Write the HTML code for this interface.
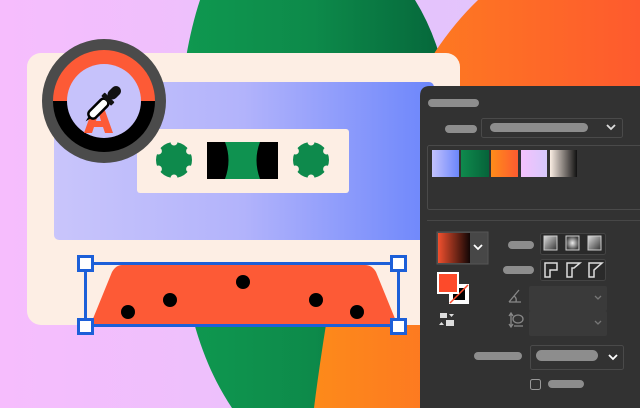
<!DOCTYPE html>
<html><head><meta charset="utf-8"><style>
html,body{margin:0;padding:0;width:640px;height:408px;overflow:hidden;background:#f0bdfd}
svg{display:block;position:absolute;left:0;top:0}
</style></head><body>
<svg width="640" height="408" viewBox="0 0 640 408" xmlns="http://www.w3.org/2000/svg">
<defs>
<linearGradient id="bg" x1="0" x2="1"><stop offset="0" stop-color="#f6bdfd"/><stop offset="1" stop-color="#dcc6fb"/></linearGradient>
<linearGradient id="gr" x1="0" x2="1"><stop offset="0" stop-color="#0f9950"/><stop offset="0.5" stop-color="#0d8a4a"/><stop offset="1" stop-color="#05653a"/></linearGradient>
<linearGradient id="or" x1="0" x2="1"><stop offset="0" stop-color="#fd8a1a"/><stop offset="1" stop-color="#fe5a2e"/></linearGradient>
<linearGradient id="win" x1="0" x2="1"><stop offset="0" stop-color="#c9c5fb"/><stop offset="0.5" stop-color="#b2b3fb"/><stop offset="1" stop-color="#6c86fb"/></linearGradient>
<linearGradient id="s1" x1="0" x2="1"><stop offset="0" stop-color="#c3c2fd"/><stop offset="1" stop-color="#6b86fb"/></linearGradient>
<linearGradient id="s2" x1="0" x2="1"><stop offset="0" stop-color="#0f8a4d"/><stop offset="1" stop-color="#06633a"/></linearGradient>
<linearGradient id="s3" x1="0" x2="1"><stop offset="0" stop-color="#fe8c1a"/><stop offset="1" stop-color="#fe5b30"/></linearGradient>
<linearGradient id="s4" x1="0" x2="1"><stop offset="0" stop-color="#f5c2fd"/><stop offset="1" stop-color="#d6c8fb"/></linearGradient>
<linearGradient id="s5" x1="0" x2="1"><stop offset="0" stop-color="#fbeee4"/><stop offset="1" stop-color="#111"/></linearGradient>
<linearGradient id="s6" x1="0" x2="1"><stop offset="0" stop-color="#f0502e"/><stop offset="1" stop-color="#120605"/></linearGradient>
<linearGradient id="btn" x1="0" y1="0" x2="1" y2="1"><stop offset="0" stop-color="#ddd"/><stop offset="1" stop-color="#333"/></linearGradient>
<radialGradient id="rad"><stop offset="0" stop-color="#eee"/><stop offset="1" stop-color="#444"/></radialGradient>
</defs>
<rect width="640" height="408" fill="url(#bg)"/>
<path d="M200,0 L415,0 Q440,40 450,100 L440,408 L232,408 C210,375 190,330 180,250 C172,150 180,60 200,0Z" fill="url(#gr)"/>
<path d="M478,0 Q455,22 435,52 L330,300 Q320,360 314,408 L640,408 L640,0Z" fill="url(#or)"/>
<rect x="27" y="53" width="433" height="272" rx="14" fill="#fdeee4"/>
<rect x="54" y="82" width="380" height="158" rx="5" fill="url(#win)"/>
<rect x="137" y="129" width="212" height="64" rx="3" fill="#fdeee4"/>
<g fill="#0e8a4c">
<circle cx="174" cy="160" r="18"/><circle cx="311" cy="160" r="18"/>
</g>
<g fill="#fdeee4">
<circle cx="174" cy="142" r="3.5"/><circle cx="174" cy="178" r="3.5"/><circle cx="158.4" cy="151" r="3.5"/><circle cx="189.6" cy="151" r="3.5"/><circle cx="158.4" cy="169" r="3.5"/><circle cx="189.6" cy="169" r="3.5"/>
<circle cx="311" cy="142" r="3.5"/><circle cx="311" cy="178" r="3.5"/><circle cx="295.4" cy="151" r="3.5"/><circle cx="326.6" cy="151" r="3.5"/><circle cx="295.4" cy="169" r="3.5"/><circle cx="326.6" cy="169" r="3.5"/>
</g>
<rect x="207" y="142" width="71" height="37" fill="#000"/>
<path d="M225,142 L260,142 Q253,160 260,179 L225,179 Q232,160 225,142Z" fill="#0f9250"/>
<path d="M122,265 L365,265 Q372,265 376,272 L398,326 L90,326 L112,272 Q116,265 122,265Z" fill="#fd5a36"/>
<g fill="#000"><circle cx="243" cy="282" r="7"/><circle cx="170" cy="300" r="7"/><circle cx="128" cy="312" r="7"/><circle cx="316" cy="300" r="7"/><circle cx="357" cy="312" r="7"/></g>
<rect x="85.5" y="263.5" width="313" height="62" fill="none" stroke="#1c5fd8" stroke-width="3"/>
<g fill="#fff" stroke="#1c5fd8" stroke-width="3">
<rect x="78.5" y="256.5" width="14" height="14"/><rect x="391.5" y="256.5" width="14" height="14"/>
<rect x="78.5" y="319.5" width="14" height="14"/><rect x="391.5" y="319.5" width="14" height="14"/>
</g>
<circle cx="104" cy="101" r="62" fill="#4b4b4b"/>
<path d="M53,101 A51,51 0 0 1 155,101Z" fill="#fd5a36"/>
<path d="M53,101 A51,51 0 0 0 155,101Z" fill="#000"/>
<circle cx="104" cy="101" r="37" fill="#c6c2fb"/>
<path d="M84,133 L94,105 L103,105 L113,133 L105,133 L103,127 L94,127 L92,133Z M96,121 L101,121 L98.5,112Z" fill="#fd5a36" fill-rule="evenodd"/>
<g transform="translate(104,103) rotate(45)">
<rect x="-4.5" y="-4" width="9" height="24" rx="4" fill="#fff" stroke="#000" stroke-width="2.5"/>
<rect x="-7" y="-8" width="14" height="5" rx="1" fill="#111"/>
<rect x="-5" y="-22" width="10" height="15" rx="5" fill="#111"/>
<path d="M-1.5,20 L0,26 L1.5,20Z" fill="#000"/>
</g>
<path d="M430,86 L640,86 L640,408 L420,408 L420,96 Q420,86 430,86Z" fill="#323232"/>
<g fill="#8d8d8d">
<rect x="428" y="99" width="51" height="8" rx="4"/>
<rect x="445" y="125" width="32" height="8" rx="4"/>
<rect x="490" y="123" width="98" height="9" rx="4.5"/>
<rect x="508" y="241" width="26" height="8" rx="4"/>
<rect x="503" y="266" width="31" height="8" rx="4"/>
<rect x="474" y="352" width="48" height="8" rx="4"/>
<rect x="536" y="350" width="62" height="11" rx="5.5"/>
<rect x="548" y="380" width="36" height="8" rx="4"/>
</g>
<rect x="481.5" y="118.5" width="141" height="19" rx="2" fill="none" stroke="#4a4a4a"/>
<path d="M607,125 L611,129 L615,125" fill="none" stroke="#ddd" stroke-width="1.8"/>
<rect x="427.5" y="145.5" width="214" height="64" rx="2" fill="none" stroke="#4a4a4a"/>
<rect x="432" y="150" width="27" height="27" fill="url(#s1)"/>
<rect x="461" y="150" width="28" height="27" fill="url(#s2)"/>
<rect x="491" y="150" width="27" height="27" fill="url(#s3)"/>
<rect x="521" y="150" width="26" height="27" fill="url(#s4)"/>
<rect x="550" y="150" width="27" height="27" fill="url(#s5)"/>
<rect x="427" y="220" width="213" height="1" fill="#474747"/>
<rect x="437" y="232" width="51" height="32" fill="#474747" stroke="#555"/>
<rect x="438" y="233" width="32" height="30" fill="url(#s6)"/>
<path d="M474,245 L478,249 L482,245" fill="none" stroke="#fff" stroke-width="1.8"/>
<rect x="449" y="284" width="20" height="20" fill="#fff"/>
<rect x="453" y="288" width="12" height="12" fill="#000"/>
<line x1="450" y1="303" x2="468" y2="285" stroke="#fd4a2a" stroke-width="1.5"/>
<rect x="437" y="272" width="22" height="22" fill="#fff"/>
<rect x="439" y="274" width="18" height="18" fill="#fd4a2a"/>
<g fill="#ddd"><rect x="440" y="313" width="7" height="5"/><path d="M449,314 L454,314 L451.5,317Z"/><path d="M439,325 L441.5,322 L444,325Z"/><rect x="446" y="320" width="8" height="6"/></g>
<rect x="540.5" y="233.5" width="65" height="21" rx="2" fill="#2a2a2a" stroke="#444"/>
<rect x="540.5" y="259.5" width="65" height="21" rx="2" fill="#2a2a2a" stroke="#444"/>
<rect x="544" y="236" width="13" height="14" fill="url(#btn)" stroke="#ccc"/>
<rect x="566" y="236" width="13" height="14" fill="url(#rad)" stroke="#ccc"/>
<rect x="588" y="236" width="13" height="14" fill="url(#btn)" stroke="#ccc"/>
<g fill="none" stroke="#ddd" stroke-width="1.5">
<path d="M545,277 L545,263 L557,263 L557,270 L550,270 L550,277Z"/>
<path d="M567,277 L567,263 L580,263 L574,268 L572,268 L572,277Z"/>
<path d="M589,277 L589,263 L602,263 L594,270 L594,277Z"/>
</g>
<rect x="529" y="286" width="78" height="25" rx="2" fill="#3a3a3a"/>
<rect x="529" y="311" width="78" height="25" rx="2" fill="#3a3a3a"/>
<path d="M595,296 L598,299 L601,296" fill="none" stroke="#777" stroke-width="1.3"/>
<path d="M595,321 L598,324 L601,321" fill="none" stroke="#777" stroke-width="1.3"/>
<path d="M509,302 L519,290 M509,302 L521,302 M514,296 Q517,298 516,302" fill="none" stroke="#888" stroke-width="1.3"/>
<g fill="none" stroke="#888" stroke-width="1.3"><path d="M511,314 L511,326 M509,316 L511,313 L513,316 M509,324 L511,327 L513,324"/><ellipse cx="518" cy="319" rx="5" ry="4"/><line x1="514" y1="326" x2="523" y2="326"/></g>
<rect x="530.5" y="345.5" width="93" height="24" rx="2" fill="none" stroke="#4a4a4a"/>
<path d="M609,355 L613,359 L617,355" fill="none" stroke="#fff" stroke-width="1.8"/>
<rect x="530.5" y="379.5" width="10" height="10" rx="2" fill="none" stroke="#999"/>
</svg>
</body></html>
